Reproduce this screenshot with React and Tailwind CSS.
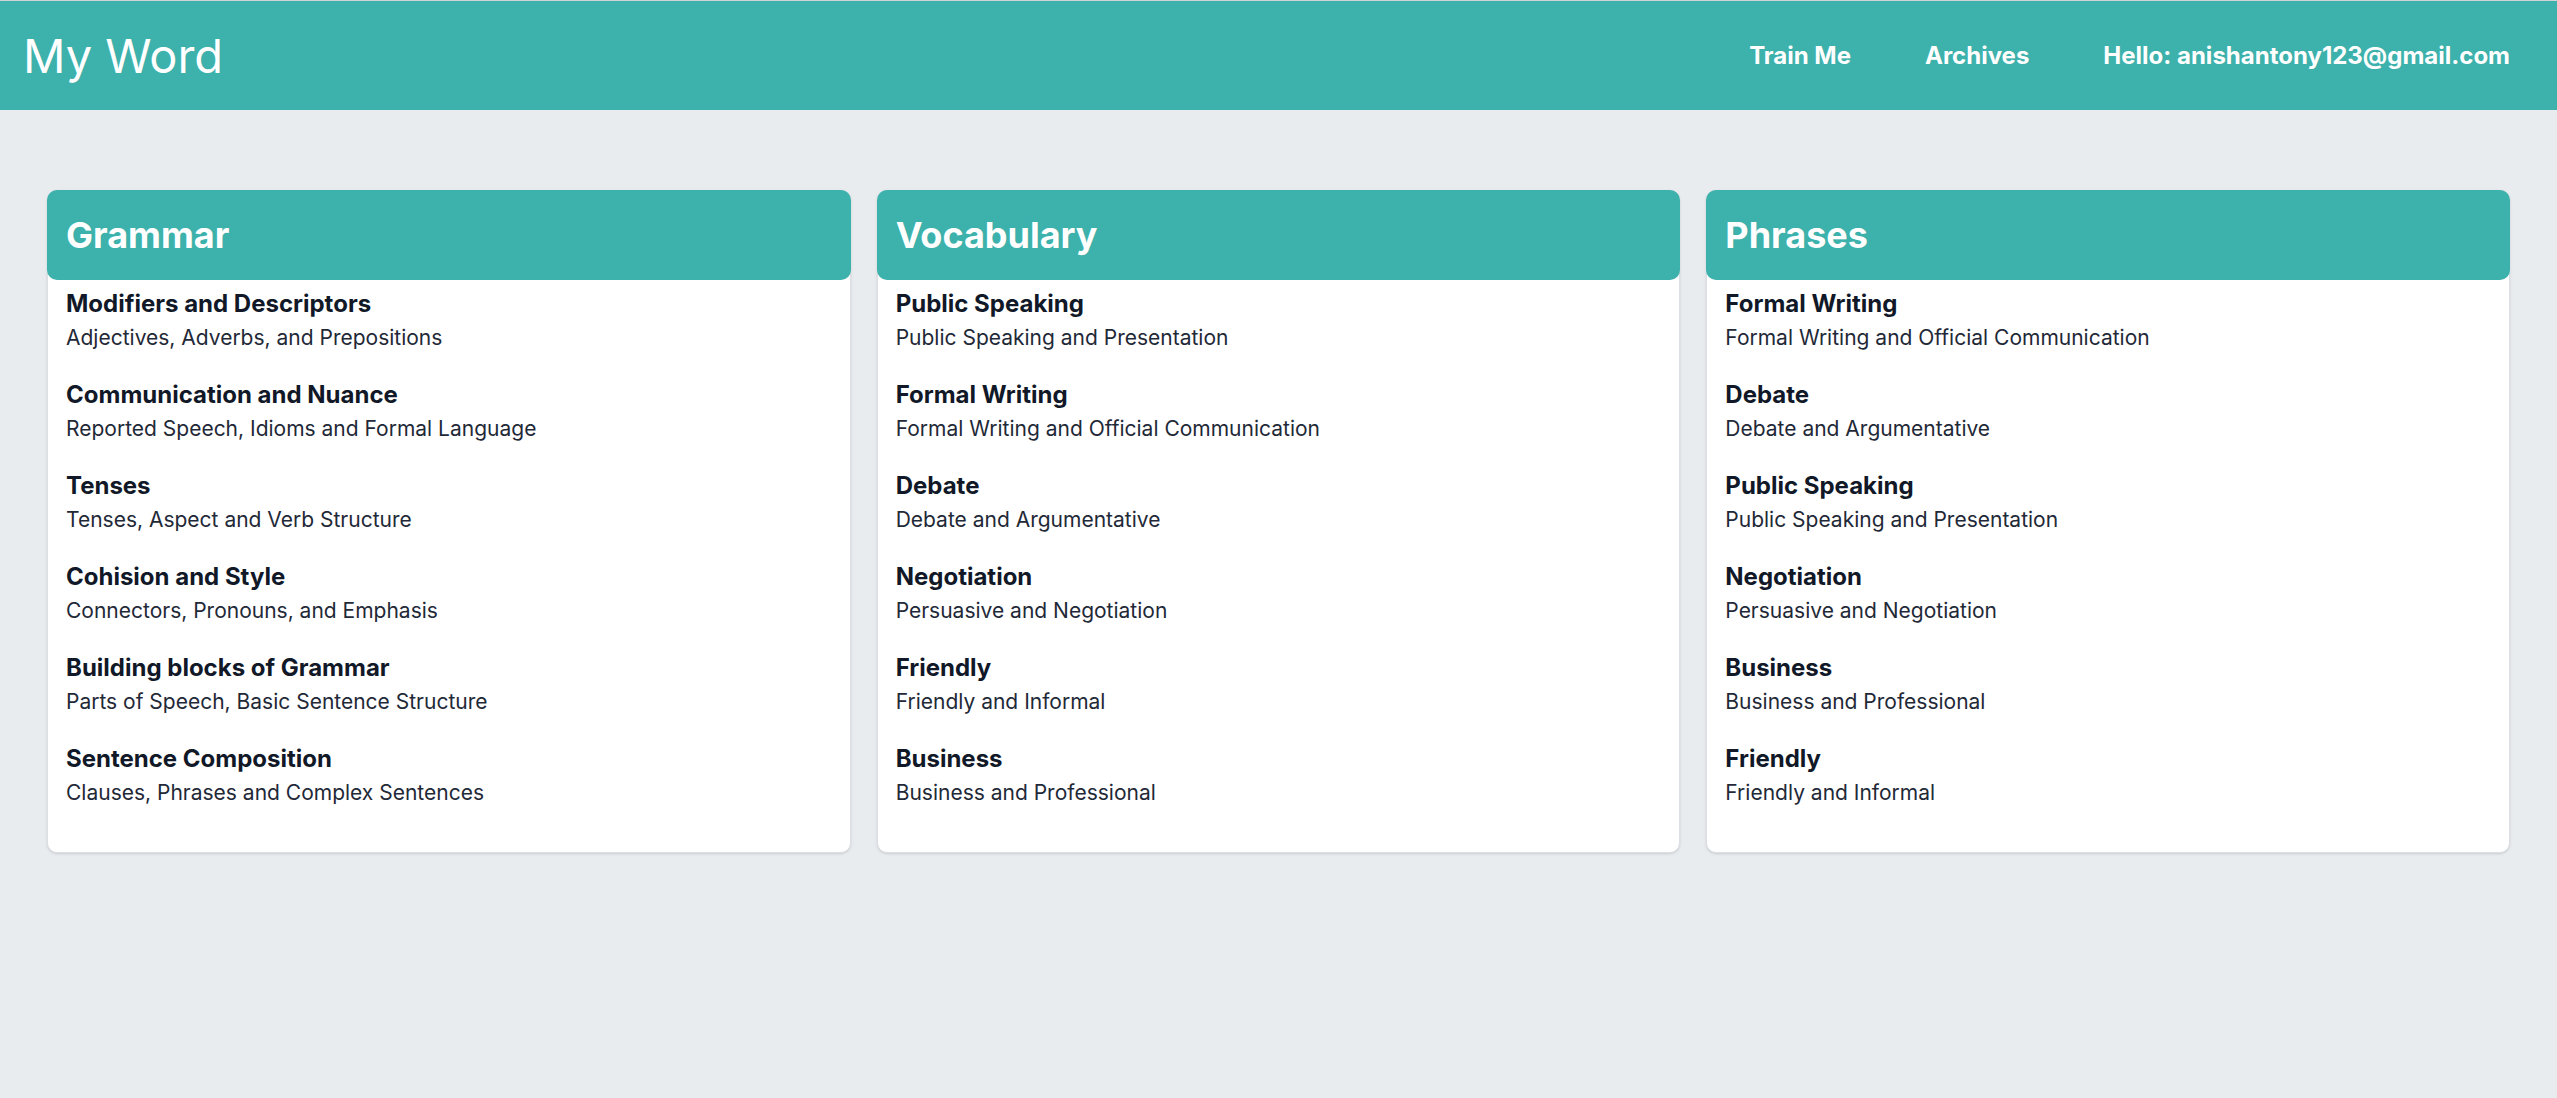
import React from 'react';

const sections = [
  {
    title: 'Grammar',
    items: [
      ['Modifiers and Descriptors', 'Adjectives, Adverbs, and Prepositions'],
      ['Communication and Nuance', 'Reported Speech, Idioms and Formal Language'],
      ['Tenses', 'Tenses, Aspect and Verb Structure'],
      ['Cohision and Style', 'Connectors, Pronouns, and Emphasis'],
      ['Building blocks of Grammar', 'Parts of Speech, Basic Sentence Structure'],
      ['Sentence Composition', 'Clauses, Phrases and Complex Sentences'],
    ],
  },
  {
    title: 'Vocabulary',
    items: [
      ['Public Speaking', 'Public Speaking and Presentation'],
      ['Formal Writing', 'Formal Writing and Official Communication'],
      ['Debate', 'Debate and Argumentative'],
      ['Negotiation', 'Persuasive and Negotiation'],
      ['Friendly', 'Friendly and Informal'],
      ['Business', 'Business and Professional'],
    ],
  },
  {
    title: 'Phrases',
    items: [
      ['Formal Writing', 'Formal Writing and Official Communication'],
      ['Debate', 'Debate and Argumentative'],
      ['Public Speaking', 'Public Speaking and Presentation'],
      ['Negotiation', 'Persuasive and Negotiation'],
      ['Business', 'Business and Professional'],
      ['Friendly', 'Friendly and Informal'],
    ],
  },
];

const Card = ({ title, items }) => (
  <div className="bg-white rounded-[10px] border border-[#dcdfe3] shadow-sm">
    <div className="h-[90px] -m-px mb-0 flex items-center px-[19px] bg-[#3db1ab] rounded-[10px]">
      <h2 className="text-[36px] font-bold text-white leading-none">{title}</h2>
    </div>
    <ul className="flex flex-col gap-[27px] px-[18px] pt-[8px] pb-[45px]">
      {items.map(([name, desc]) => (
        <li key={name}>
          <div className="text-[24px] leading-[32px] font-bold text-[#111827]">{name}</div>
          <div className="mt-[4px] text-[21px] leading-[28px] text-[#1f2937]">{desc}</div>
        </li>
      ))}
    </ul>
  </div>
);

export default function App() {
  return (
    <div className="min-h-screen bg-[#e8ecef] font-['Inter',sans-serif] border-t border-[#cfd3d6]">
      <header className="h-[109px] bg-[#3db1ab] flex items-center justify-between pl-[23px] pr-[47px]">
        <h1 className="text-[47px] text-white font-normal leading-none">My Word</h1>
        <nav className="flex items-center gap-[74px] text-[24px] font-bold text-white">
          <a href="#">Train Me</a>
          <a href="#">Archives</a>
          <span>Hello: anishantony123@gmail.com</span>
        </nav>
      </header>
      <main className="grid grid-cols-3 gap-[26px] pl-[47px] pr-[47px] pt-[80px] items-start">
        {sections.map((s) => (
          <Card key={s.title} {...s} />
        ))}
      </main>
    </div>
  );
}
